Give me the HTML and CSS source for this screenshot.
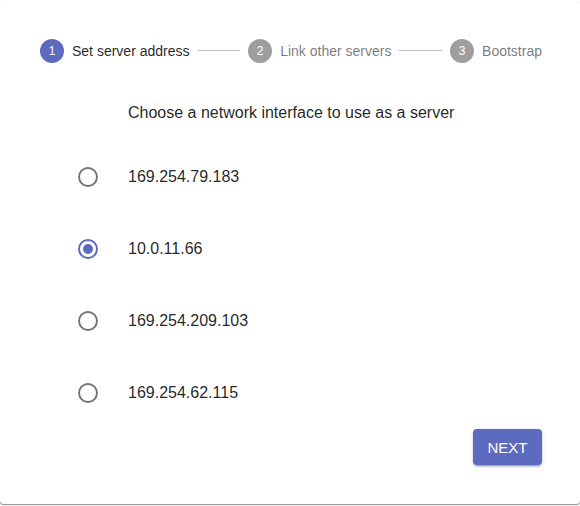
FILE: index.html
```html
<!DOCTYPE html>
<html>
<head>
<meta charset="utf-8">
<link rel="stylesheet" href="styles.css">
</head>
<body>
<div class="card">
  <div class="stepper">
    <div class="step">
      <span class="step-icon active">1</span>
      <span class="step-label active">Set server address</span>
    </div>
    <div class="connector"></div>
    <div class="step">
      <span class="step-icon">2</span>
      <span class="step-label">Link other servers</span>
    </div>
    <div class="connector"></div>
    <div class="step">
      <span class="step-icon">3</span>
      <span class="step-label">Bootstrap</span>
    </div>
  </div>
  <div class="heading">Choose a network interface to use as a server</div>
  <div class="options">
    <label class="option">
      <svg class="radio" viewBox="0 0 20 20" width="20" height="20"><circle cx="10" cy="10" r="9" fill="none" stroke="#757575" stroke-width="2"/></svg>
      <span class="option-label">169.254.79.183</span>
    </label>
    <label class="option">
      <svg class="radio" viewBox="0 0 20 20" width="20" height="20"><circle cx="10" cy="10" r="9" fill="none" stroke="#5c6bc0" stroke-width="2"/><circle cx="10" cy="10" r="5" fill="#5c6bc0"/></svg>
      <span class="option-label">10.0.11.66</span>
    </label>
    <label class="option">
      <svg class="radio" viewBox="0 0 20 20" width="20" height="20"><circle cx="10" cy="10" r="9" fill="none" stroke="#757575" stroke-width="2"/></svg>
      <span class="option-label">169.254.209.103</span>
    </label>
    <label class="option">
      <svg class="radio" viewBox="0 0 20 20" width="20" height="20"><circle cx="10" cy="10" r="9" fill="none" stroke="#757575" stroke-width="2"/></svg>
      <span class="option-label">169.254.62.115</span>
    </label>
  </div>
  <div class="actions">
    <button class="next">NEXT</button>
  </div>
</div>
</body>
</html>
```

FILE: styles.css
```css
* { box-sizing: border-box; }
html, body { margin: 0; padding: 0; background: #ffffff; }
body {
  font-family: "Liberation Sans", Arial, sans-serif;
  width: 580px;
  height: 506px;
  overflow: hidden;
}
.card {
  width: 580px;
  height: 504px;
  background: #fff;
  border-radius: 4px;
  box-shadow: 0 1px 1px -0.5px rgba(0,0,0,0.45);
  display: flex;
  flex-direction: column;
}
.stepper {
  display: flex;
  align-items: center;
  padding: 38px 38px 0 40px;
}
.step {
  display: flex;
  align-items: center;
  gap: 8px;
}
.step-icon {
  width: 24px;
  height: 24px;
  border-radius: 50%;
  background: #9e9e9e;
  color: #fff;
  font-size: 12px;
  display: flex;
  align-items: center;
  justify-content: center;
}
.step-icon.active { background: #5c6bc0; }
.step-label {
  font-size: 14px;
  color: rgba(0,0,0,0.54);
  line-height: 24px;
  padding-top: 1px;
}
.step-label.active { color: rgba(0,0,0,0.87); }
.connector {
  flex: 1;
  margin: 0 8px;
  border-top: 1px solid #bdbdbd;
}
.heading {
  margin-top: 38px;
  padding-left: 128px;
  font-size: 16px;
  line-height: 24px;
  color: rgba(0,0,0,0.87);
}
.options {
  margin-top: 16px;
  display: flex;
  flex-direction: column;
}
.option {
  height: 72px;
  display: flex;
  align-items: center;
  padding-left: 78px;
  gap: 30px;
}
.radio { display: block; flex: none; }
.option-label {
  font-size: 16px;
  color: rgba(0,0,0,0.87);
}
.actions {
  display: flex;
  justify-content: flex-end;
  padding-right: 38px;
}
.next {
  width: 69px;
  height: 36px;
  border: none;
  border-radius: 4px;
  background: #5c6bc0;
  color: #fff;
  font-family: "Liberation Sans", Arial, sans-serif;
  font-size: 15px;
  box-shadow: 0 3px 1px -2px rgba(0,0,0,0.2), 0 2px 2px 0 rgba(0,0,0,0.14), 0 1px 5px 0 rgba(0,0,0,0.12);
  cursor: pointer;
}
```
